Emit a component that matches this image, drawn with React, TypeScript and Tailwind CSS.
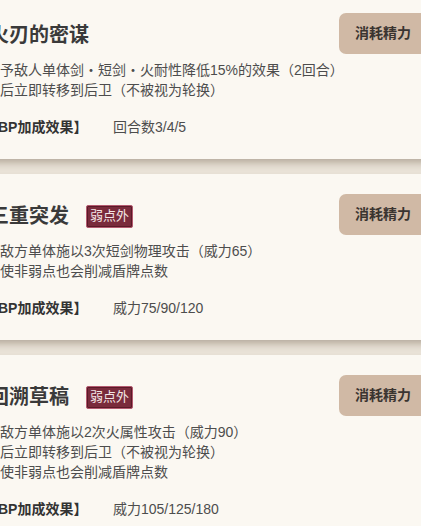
import React from "react";

type Skill = {
  title: string;
  weak?: boolean;
  lines: string[];
  bp: string;
};

const skills: Skill[] = [
  {
    title: "火刃的密谋",
    lines: ["给予敌人单体剑・短剑・火耐性降低15%的效果（2回合）", "随后立即转移到后卫（不被视为轮换）"],
    bp: "回合数3/4/5",
  },
  {
    title: "三重突发",
    weak: true,
    lines: ["对敌方单体施以3次短剑物理攻击（威力65）", "即使非弱点也会削减盾牌点数"],
    bp: "威力75/90/120",
  },
  {
    title: "回溯草稿",
    weak: true,
    lines: [
      "对敌方单体施以2次火属性攻击（威力90）",
      "随后立即转移到后卫（不被视为轮换）",
      "即使非弱点也会削减盾牌点数",
    ],
    bp: "威力105/125/180",
  },
];

const font = { fontFamily: '"Liberation Sans", "Noto Sans CJK SC", sans-serif' };

function Card({ s }: { s: Skill }) {
  return (
    <div className="flex bg-[#fbf8f2] pl-[26px] pr-[3px] pt-[20px] pb-[22px] shadow-[0_5px_7px_-1px_rgba(110,95,75,0.4)]">
      <div className="flex min-w-0 flex-1 flex-col">
        <div className="ml-[3px] mt-[8px] flex h-[28px] items-center gap-[17px]">
          <span className="text-[20px] font-bold leading-[28px] text-[#3a3a3a]">{s.title}</span>
          {s.weak && (
            <span className="flex h-[23px] items-center rounded-[2px] border border-[#b45a70] bg-[#7a2b3c] px-[3px] text-[13px] leading-[20px] text-[#f3e6e6] shadow-[inset_0_0_0_1px_rgba(60,10,20,0.5)]">
              弱点外
            </span>
          )}
        </div>
        <div className="mt-[11px] flex flex-col text-[14px] leading-[20px] text-[#4d4d4d]">
          {s.lines.map((l, i) => (
            <div key={i} className="whitespace-nowrap">
              {l}
            </div>
          ))}
        </div>
        <div className="mt-[17px] flex text-[14px] leading-[20px]">
          <span className="-ml-[2px] w-[129px] font-bold text-[#333]">【BP加成效果】</span>
          <span className="text-[#4d4d4d]">{s.bp}</span>
        </div>
      </div>
      <div className="flex h-[41px] w-[88px] shrink-0 items-center justify-center rounded-[7px] bg-[#d0b9a5] text-[14px] font-bold text-[#3a3430]">
        消耗精力
      </div>
    </div>
  );
}

export default function App() {
  return (
    <div className="h-[526px] w-[421px] overflow-hidden bg-[#e9e2d7]" style={font}>
      <div className="-ml-[40px] -mt-[7px] flex w-[470px] flex-col gap-[15px]">
        {skills.map((s, i) => (
          <Card key={i} s={s} />
        ))}
      </div>
    </div>
  );
}
